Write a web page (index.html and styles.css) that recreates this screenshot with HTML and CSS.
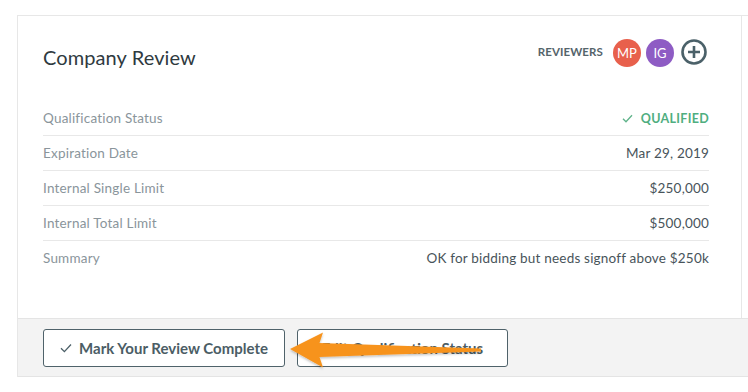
FILE: index.html
```html
<!DOCTYPE html>
<html>
<head>
<meta charset="utf-8">
<link rel="stylesheet" href="styles.css">
</head>
<body>
<div class="card">
  <div class="card-body">
    <div class="header">
      <h1 class="title">Company Review</h1>
      <div class="reviewers">
        <span class="reviewers-label">REVIEWERS</span>
        <span class="avatar avatar-mp">MP</span>
        <span class="avatar avatar-ig">IG</span>
        <svg class="add" width="28" height="28" viewBox="0 0 28 28">
          <circle cx="14" cy="14" r="11.5" fill="none" stroke="#4b6169" stroke-width="2.6"/>
          <path d="M14 8v12M8 14h12" stroke="#4b6169" stroke-width="2.6" stroke-linecap="butt"/>
        </svg>
      </div>
    </div>
    <div class="rows">
      <div class="row">
        <span class="label">Qualification Status</span>
        <span class="value qualified">
          <svg class="check" width="11" height="9" viewBox="0 0 11 9"><path d="M1 4.8l3 3L10 1.3" fill="none" stroke="#5fb38a" stroke-width="1.3"/></svg>
          QUALIFIED
        </span>
      </div>
      <div class="row">
        <span class="label">Expiration Date</span>
        <span class="value">Mar 29, 2019</span>
      </div>
      <div class="row">
        <span class="label">Internal Single Limit</span>
        <span class="value">$250,000</span>
      </div>
      <div class="row">
        <span class="label">Internal Total Limit</span>
        <span class="value">$500,000</span>
      </div>
      <div class="row">
        <span class="label">Summary</span>
        <span class="value">OK for bidding but needs signoff above $250k</span>
      </div>
    </div>
  </div>
  <div class="footer">
    <button class="btn btn-complete">
      <svg class="btn-check" width="12" height="10" viewBox="0 0 12 10"><path d="M1 5.2l3.4 3.4L11 1.5" fill="none" stroke="#4b5f67" stroke-width="1.3"/></svg>
      Mark Your Review Complete
    </button>
    <button class="btn btn-edit">Edit Qualification Status</button>
    <svg class="arrow" width="200" height="46" viewBox="0 0 200 46">
      <defs>
        <filter id="sh" x="-10%" y="-30%" width="120%" height="160%">
          <feDropShadow dx="0" dy="1.5" stdDeviation="1.2" flood-color="#000" flood-opacity="0.25"/>
        </filter>
      </defs>
      <path d="M5 21 L38 4.5 L34.5 15 L196 20.5 L196 23.5 L34.5 29 L38 39.5 Z" fill="#f7931e" filter="url(#sh)"/>
    </svg>
  </div>
</div>
</body>
</html>
```

FILE: styles.css
```css
html, body {
  margin: 0;
  padding: 0;
  background: #ffffff;
  overflow: hidden;
}
body {
  font-family: "Lato", "Open Sans", sans-serif;
  width: 748px;
  height: 392px;
}
.card {
  margin: 15px 0 0 17px;
  width: 760px;
  border-top: 1px solid #e7e7e7;
  border-left: 1px solid #e7e7e7;
}
.card-body {
  width: 666px;
  padding: 23px 32px 43px 25px;
  border-right: 1px solid #e7e7e7;
}
.header {
  display: flex;
  justify-content: space-between;
  align-items: flex-start;
  height: 28px;
}
.title {
  margin: 6px 0 0 0;
  font-size: 20px;
  line-height: 24px;
  font-weight: 400;
  color: #2f3a3f;
  letter-spacing: 0.1px;
}
.reviewers {
  display: flex;
  align-items: center;
  height: 28px;
  margin-right: 1px;
}
.reviewers-label {
  font-size: 11.5px;
  font-weight: 700;
  color: #55646b;
  letter-spacing: 0.1px;
  margin-right: 10px;
  margin-top: -4px;
}
.avatar {
  width: 28px;
  height: 28px;
  border-radius: 50%;
  display: flex;
  align-items: center;
  justify-content: center;
  color: #fff;
  font-size: 13px;
  margin-right: 5px;
}
.avatar-mp { background: #e8604c; }
.avatar-ig { background: #8e5cc4; }
.add {
  margin-left: 1px;
  margin-top: -3px;
}
.rows {
  margin-top: 34px;
}
.row {
  display: flex;
  justify-content: space-between;
  align-items: center;
  height: 34px;
  border-bottom: 1px solid #e8e8e8;
  font-size: 13.5px;
  letter-spacing: 0.2px;
}
.row:last-child {
  border-bottom: none;
  align-items: flex-start;
  padding-top: 9px;
  height: 25px;
}
.label {
  color: #8a959b;
}
.value {
  color: #48545a;
}
.qualified {
  display: flex;
  align-items: center;
  color: #4fae80;
  font-weight: 700;
  font-size: 12.5px;
  letter-spacing: 0.3px;
}
.check {
  margin-right: 8px;
}
.footer {
  position: relative;
  display: flex;
  gap: 12px;
  padding: 10px 25px 9px 25px;
  background: #f3f3f3;
  border-top: 1px solid #e4e4e4;
  border-bottom: 1px solid #e4e4e4;
}
.btn {
  display: flex;
  align-items: center;
  justify-content: center;
  height: 38px;
  background: #ffffff;
  border: 1px solid #4f626a;
  border-radius: 3px;
  font-family: "Lato", "Open Sans", sans-serif;
  font-size: 15px;
  font-weight: 700;
  color: #4b5d65;
  padding: 0;
}
.btn-complete {
  width: 242px;
}
.btn-check {
  margin-right: 7px;
}
.btn-edit {
  width: 211px;
}
.arrow {
  position: absolute;
  left: 267px;
  top: 9px;
}
```
